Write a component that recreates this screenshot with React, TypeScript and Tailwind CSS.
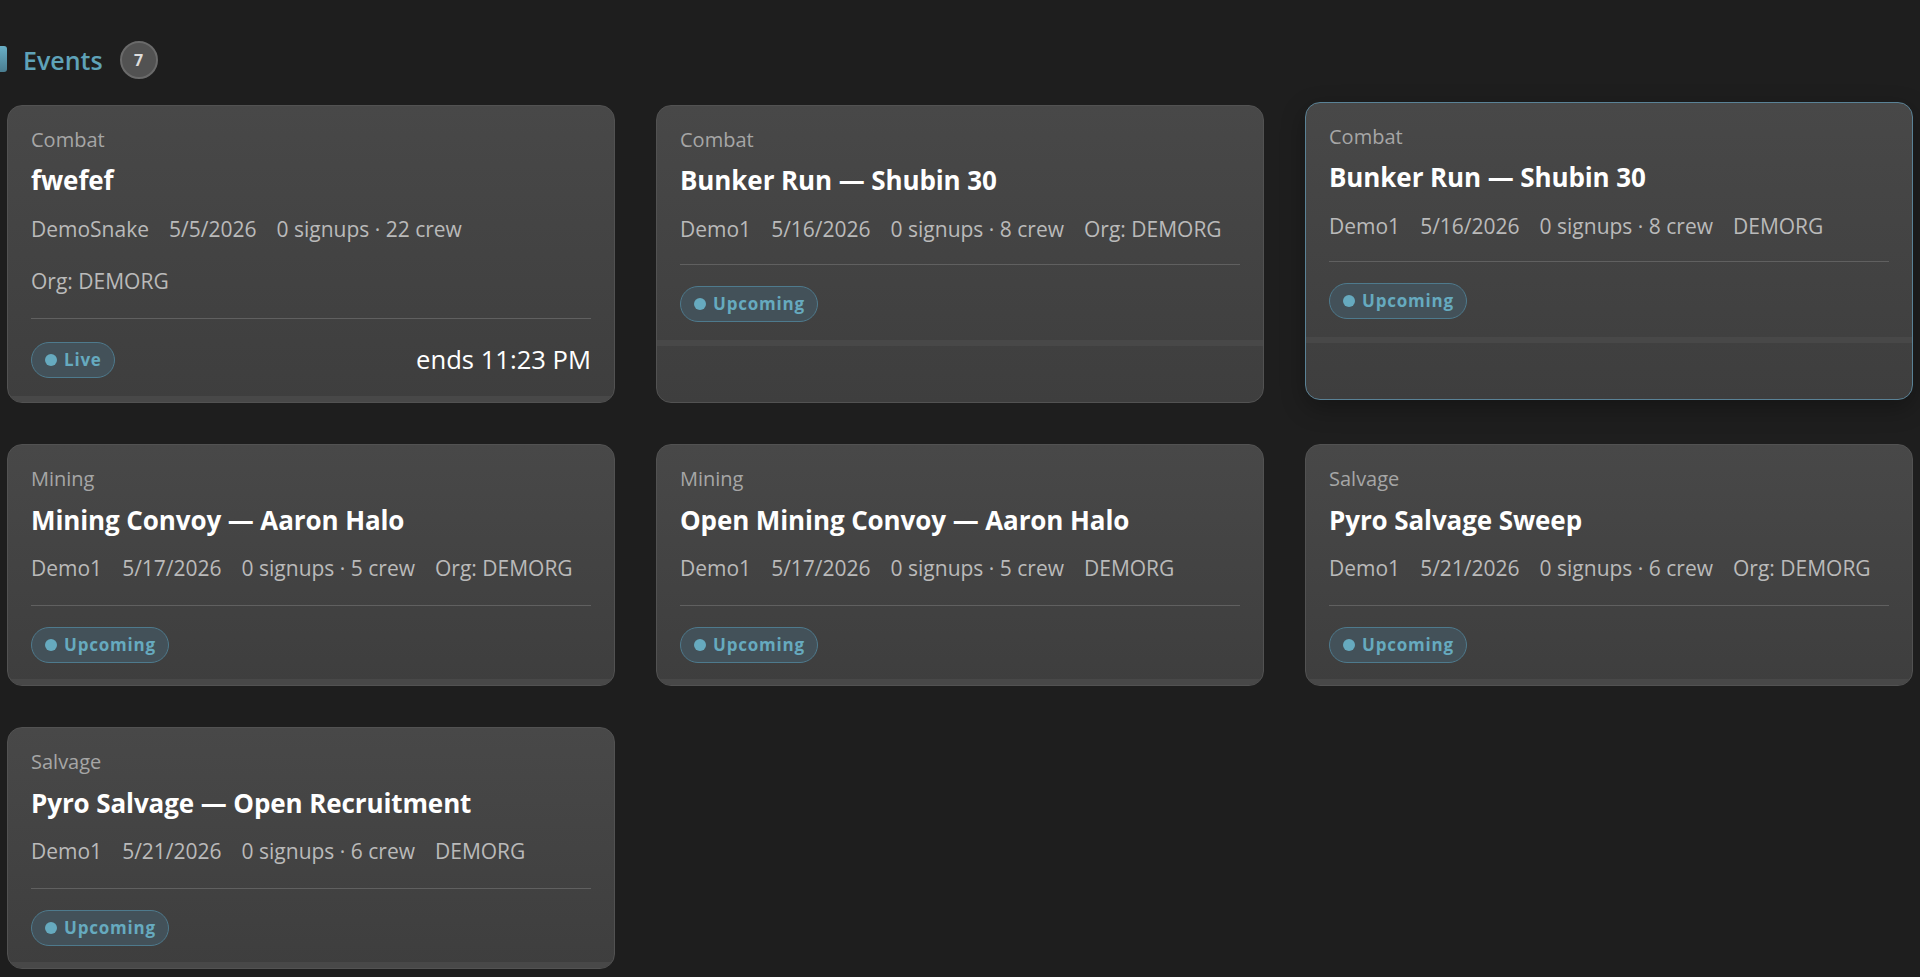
const events = [
  { type: "Combat", title: "fwefef", meta: ["DemoSnake", "5/5/2026", "0 signups · 22 crew", "Org: DEMORG"], status: "Live", ends: "ends 11:23 PM", row1: true },
  { type: "Combat", title: "Bunker Run — Shubin 30", meta: ["Demo1", "5/16/2026", "0 signups · 8 crew", "Org: DEMORG"], status: "Upcoming", row1: true, tight: true },
  { type: "Combat", title: "Bunker Run — Shubin 30", meta: ["Demo1", "5/16/2026", "0 signups · 8 crew", "DEMORG"], status: "Upcoming", hovered: true, row1: true, tight: true },
  { type: "Mining", title: "Mining Convoy — Aaron Halo", meta: ["Demo1", "5/17/2026", "0 signups · 5 crew", "Org: DEMORG"], status: "Upcoming" },
  { type: "Mining", title: "Open Mining Convoy — Aaron Halo", meta: ["Demo1", "5/17/2026", "0 signups · 5 crew", "DEMORG"], status: "Upcoming" },
  { type: "Salvage", title: "Pyro Salvage Sweep", meta: ["Demo1", "5/21/2026", "0 signups · 6 crew", "Org: DEMORG"], status: "Upcoming" },
  { type: "Salvage", title: "Pyro Salvage — Open Recruitment", meta: ["Demo1", "5/21/2026", "0 signups · 6 crew", "DEMORG"], status: "Upcoming" },
]

const EventCard = ({ event }: { event: (typeof events)[number] }) => (
  <div
    className={`flex flex-col overflow-hidden rounded-[15px] border bg-gradient-to-b from-[#484848] to-[#3e3e3e] ${
      event.hovered
        ? "-translate-y-[3px] border-[#5a8296] shadow-[0_8px_24px_rgba(0,0,0,0.3)]"
        : "border-[#525252]"
    }`}
  >
    <div className="flex flex-col px-[23px] pt-[20px]">
      <div className="text-[20px] leading-[28px] text-[#a6a6a6]">{event.type}</div>
      <div className={`text-[26px] leading-[34px] font-bold tracking-[-0.1px] text-white ${event.row1 ? "mt-[9px]" : "mt-[10px]"}`}>
        {event.title}
      </div>
      <div
        className={`flex flex-wrap gap-x-[20px] gap-y-[24px] text-[21px] leading-[28px] text-[#bababa] ${event.row1 ? "mt-[18px]" : "mt-[17px]"}`}
      >
        {event.meta.map((m) => (
          <span key={m}>{m}</span>
        ))}
      </div>
      <div
        className={`flex items-center justify-between border-t border-[#606060] pt-[21px] ${
          event.tight ? "mt-[21px] pb-[18px]" : "mt-[23px] pb-[16px]"
        }`}
      >
        <span className="flex h-[36px] items-center gap-[7px] rounded-full border border-[#4e7a8d] bg-[#435159] pr-[12px] pl-[13px] text-[17px] font-bold tracking-[0.8px] text-[#66aabf]">
          <span className="h-[12px] w-[12px] rounded-full bg-[#66aabf]" />
          {event.status}
        </span>
        {event.ends && <span className="text-[25.6px] leading-[40px] text-white">{event.ends}</span>}
      </div>
    </div>
    <div className="h-[6px] bg-[#484848]" />
  </div>
)

export default function App() {
  return (
    <div className="h-screen overflow-hidden bg-[#1e1e1e] font-['Open_Sans','Noto_Sans',sans-serif]">
      <div className="flex h-[105px] items-start pt-[41px]">
        <span className="mt-[5px] h-[26px] w-[7px] rounded-r-[3px] bg-gradient-to-b from-[#69afc6] to-[#4a7d90]" />
        <span className="ml-[16px] text-[25px] leading-[38px] font-semibold text-[#5fa2b8]">Events</span>
        <span className="ml-[17px] flex h-[38px] w-[38px] items-center justify-center rounded-full border-2 border-[#6a6a6a] bg-[#525252] text-[16px] font-bold text-[#dddddd]">
          7
        </span>
      </div>
      <div className="grid grid-cols-3 gap-x-[41px] gap-y-[41px] px-[7px]">
        {events.map((event, i) => (
          <EventCard key={i} event={event} />
        ))}
      </div>
    </div>
  )
}
